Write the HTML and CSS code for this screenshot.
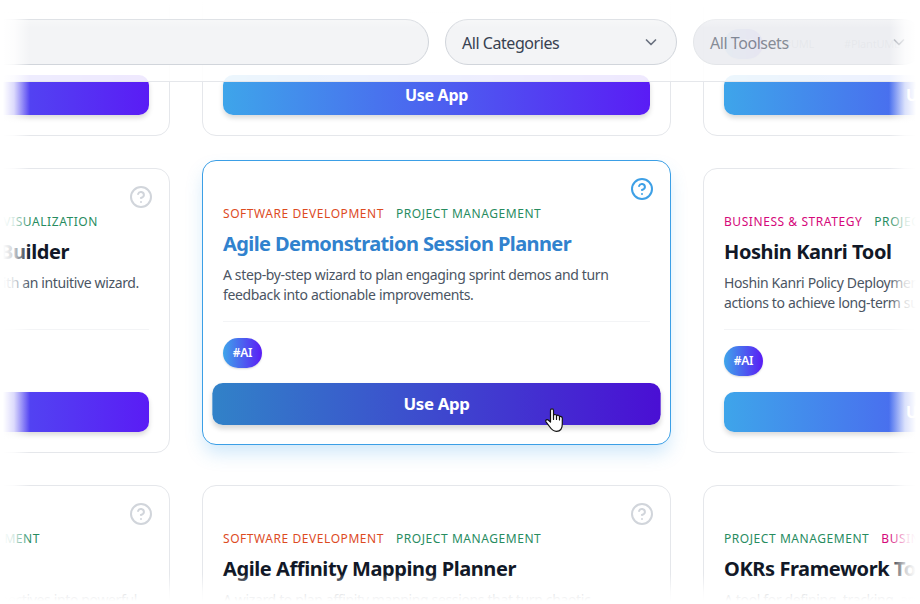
FILE: index.html
```html
<!DOCTYPE html>
<html lang="en">
<head>
<meta charset="UTF-8">
    <title>Apps</title>
    <link rel="stylesheet" href="styles.css">
</head>
<body>
    <svg width="0" height="0" class="sprite">
        <symbol id="help" viewBox="0 0 24 24">
            <circle cx="12" cy="12" r="10"/>
            <path d="M9.09 9a3 3 0 0 1 5.83 1c0 2-3 3-3 3"/>
            <path d="M12 17h.01"/>
        </symbol>
        <symbol id="chevron" viewBox="0 0 12 12">
            <path d="M1.5 4 6 8.500l4.500-4.500"/>
        </symbol>
    </svg>

    <div class="viewport">
        <div class="filters">
            <div class="field search"></div>
            <div class="field select"><span>All Categories</span><svg><use href="#chevron"/></svg></div>
            <div class="field select disabled"><span>All Toolsets</span><svg><use href="#chevron"/></svg></div>
        </div>

        <div class="grid">
            <!-- row 1 -->
            <div class="card">
                <div class="tags"></div>
                <div class="btn">Use App</div>
            </div>
            <div class="card">
                <div class="tags"></div>
                <div class="btn">Use App</div>
            </div>
            <div class="card">
                <div class="tags"><span class="tag">#AI</span><span class="tag plain">#UML</span><span class="tag plain">#PlantUML</span></div>
                <div class="btn">Use App</div>
            </div>

            <!-- row 2 -->
            <div class="card cut">
                <svg class="help"><use href="#help"/></svg>
                <div class="cats"><span class="green">Visualization</span></div>
                <h2>Builder</h2>
                <p>with an intuitive wizard.</p>
                <div class="tags"></div>
                <div class="btn">Use App</div>
            </div>
            <div class="card active">
                <svg class="help"><use href="#help"/></svg>
                <div class="cats"><span class="orange">Software Development</span><span class="green">Project Management</span></div>
                <h2>Agile Demonstration Session Planner</h2>
                <p>A step-by-step wizard to plan engaging sprint demos and turn<br>feedback into actionable improvements.</p>
                <div class="tags"><span class="tag">#AI</span></div>
                <div class="btn">Use App</div>
            </div>
            <div class="card">
                <svg class="help"><use href="#help"/></svg>
                <div class="cats"><span class="pink">Business &amp; Strategy</span><span class="green">Project</span></div>
                <h2>Hoshin Kanri Tool</h2>
                <p>Hoshin Kanri Policy Deployment<br>actions to achieve long-term su</p>
                <div class="tags"><span class="tag">#AI</span></div>
                <div class="btn">Use App</div>
            </div>

            <!-- row 3 -->
            <div class="card cut short">
                <svg class="help"><use href="#help"/></svg>
                <div class="cats"><span class="green">Management</span></div>
                <h2></h2>
                <p>perspectives into powerful</p>
            </div>
            <div class="card">
                <svg class="help"><use href="#help"/></svg>
                <div class="cats"><span class="orange">Software Development</span><span class="green">Project Management</span></div>
                <h2>Agile Affinity Mapping Planner</h2>
                <p>A wizard to plan affinity mapping sessions that turn chaotic</p>
            </div>
            <div class="card">
                <svg class="help"><use href="#help"/></svg>
                <div class="cats"><span class="green">Project Management</span><span class="pink">Business</span></div>
                <h2>OKRs Framework Tool</h2>
                <p>A tool for defining, tracking, and</p>
            </div>
        </div>

        <div class="fade fade-top"></div>
        <div class="fade fade-bottom"></div>
        <div class="fade fade-left"></div>
        <div class="fade fade-right"></div>

        <svg class="cursor" viewBox="0 0 18 24">
            <path d="M5.500 14V2.500C5.500.3 8.500.3 8.500 2.500V7.500C9 6 11.500 6.200 11.500 8 12.300 6.700 14.500 7 14.500 9 15.300 8 17.300 8.500 17.300 10.300V16C17.300 20.500 15 23.300 11.500 23.300 8 23.300 6.500 21.500 4.500 18.500L1 13.800C0 12 2 11 3.500 12.200Z"/>
            <path d="M8.500 7.500v4M11.500 8v3.500M14.500 9v3"/>
        </svg>
    </div>
</body>
</html>
```
FILE: styles.css
```css
body, h2, p {
    margin: 0;
    padding: 0;
}

body {
    background: #fff;
    font-family: "Noto Sans", "Open Sans", sans-serif;
    color: #111827;
}

svg {
    fill: none;
    stroke: currentColor;
    stroke-width: 2;
    stroke-linecap: round;
    stroke-linejoin: round;
}

.sprite {
    position: absolute;
}

.viewport {
    position: relative;
    width: 920px;
    height: 604px;
    overflow: hidden;
}

/* filter bar, lies over the scrolled cards */
.filters {
    position: absolute;
    z-index: 5;
    top: 0;
    left: -20px;
    width: 945px;
    height: 82px;
    box-sizing: border-box;
    padding-top: 19px;
    display: flex;
    gap: 16px;
    background: rgba(255, 255, 255, .9);
    border-bottom: 1px solid #e5e7eb;
}

.field {
    box-sizing: border-box;
    height: 46px;
    border: 1px solid #d1d5db;
    border-radius: 23px;
    background: #f3f4f6;
}

.search {
    flex: 1;
}

.select {
    width: 232px;
    padding: 0 19px 0 16px;
    display: flex;
    align-items: center;
    justify-content: space-between;
    font-size: 16px;
    letter-spacing: -.45px;
    color: #374151;
}

.select span {
    padding-top: 1px;
}

.select svg {
    width: 12px;
    height: 12px;
    color: #6b7280;
    stroke-width: 1.7;
}

.disabled {
    opacity: .6;
    background: #e2e4ea;
}

/* cards */
.grid {
    display: grid;
    grid-template-columns: repeat(3, 469px);
    grid-auto-rows: 285px;
    gap: 32px;
    margin: -149px 0 0 -299px;
}

.card {
    position: relative;
    box-sizing: border-box;
    padding: 45px 20px 20px;
    border: 1px solid #e5e7eb;
    border-radius: 14px;
    background: #fff;
    display: flex;
    flex-direction: column;
}

.help {
    position: absolute;
    top: 16px;
    right: 16px;
    width: 24px;
    height: 24px;
    color: #d1d5db;
}

.cats {
    display: flex;
    gap: 12px;
    height: 16px;
    line-height: 16px;
    font-size: 12px;
    letter-spacing: .56px;
    text-transform: uppercase;
    white-space: nowrap;
}

.orange { color: #dd4b1f; }
.green { color: #278c5f; }
.pink { color: #d5087a; }

.card h2 {
    margin-top: 8px;
    height: 28px;
    line-height: 28px;
    font-size: 20px;
    font-weight: 700;
    letter-spacing: -.41px;
    white-space: nowrap;
}

.card p {
    margin-top: 7px;
    height: 40px;
    line-height: 20px;
    font-size: 14px;
    letter-spacing: -.36px;
    color: #4b5563;
    white-space: nowrap;
}

.tags {
    margin-top: auto;
    height: 30px;
    padding-top: 16px;
    border-top: 1px solid #f3f4f6;
    display: flex;
    gap: 12px;
}

.tag {
    box-sizing: border-box;
    min-width: 39px;
    padding: 0 9px;
    border-radius: 15px;
    background: linear-gradient(to right, #3ea5ea, #5a1cf5);
    box-shadow: 0 1px 2px rgba(0, 0, 0, .15);
    line-height: 30px;
    text-align: center;
    font-size: 12px;
    letter-spacing: -.2px;
    font-weight: 600;
    color: #fff;
}

.plain {
    background: none;
    box-shadow: none;
    font-size: 11px;
    font-weight: 400;
    color: #4b5563;
}

.btn {
    margin-top: 16px;
    height: 40px;
    border-radius: 10px;
    background: linear-gradient(to right, #3ea5ea, #5a1cf5);
    box-shadow: 0 3px 5px rgba(0, 0, 0, .15);
    line-height: 41px;
    text-align: center;
    font-size: 16px;
    letter-spacing: -.3px;
    font-weight: 700;
    color: #fff;
}

/* hovered card */
.active {
    transform: translateY(-8px);
    border-color: #3b9fe6;
    box-shadow: 0 10px 18px -2px rgba(62, 165, 234, .25);
}

.active .help {
    color: #3ea0e6;
}

.active h2 {
    color: #3182ce;
    letter-spacing: -.59px;
}

.active .btn {
    transform: scale(1.05);
    background: linear-gradient(to right, #3182c8, #4a0fd4);
}

/* left column, text runs out of view */
.cut .cats {
    width: 376px;
    justify-content: flex-end;
}

.cut h2 {
    width: 347px;
    text-align: right;
}

.cut p {
    width: 417px;
    text-align: right;
}

.short .cats {
    width: 318px;
}

.short p {
    width: 415px;
}

/* soft edges */
.fade {
    position: absolute;
    z-index: 10;
}

.fade-top {
    top: 0;
    left: 0;
    right: 0;
    height: 28px;
    background: linear-gradient(to bottom, #fff, rgba(255, 255, 255, 0));
}

.fade-bottom {
    bottom: 0;
    left: 0;
    right: 0;
    height: 30px;
    background: linear-gradient(to top, #fff 3px, rgba(255, 255, 255, .82) 12px, rgba(255, 255, 255, 0));
}

.fade-left {
    top: 0;
    bottom: 0;
    left: 0;
    width: 30px;
    background: linear-gradient(to right, #fff 3px, rgba(255, 255, 255, .8) 14px, rgba(255, 255, 255, 0));
}

.fade-right {
    top: 0;
    bottom: 0;
    right: 0;
    width: 31px;
    background: linear-gradient(to left, #fff 4px, rgba(255, 255, 255, .8) 15px, rgba(255, 255, 255, 0));
}

.cursor {
    position: absolute;
    z-index: 11;
    left: 545px;
    top: 408px;
    width: 18px;
    height: 24px;
    fill: #fff;
    stroke: #111;
    stroke-width: 1.2;
}
```
